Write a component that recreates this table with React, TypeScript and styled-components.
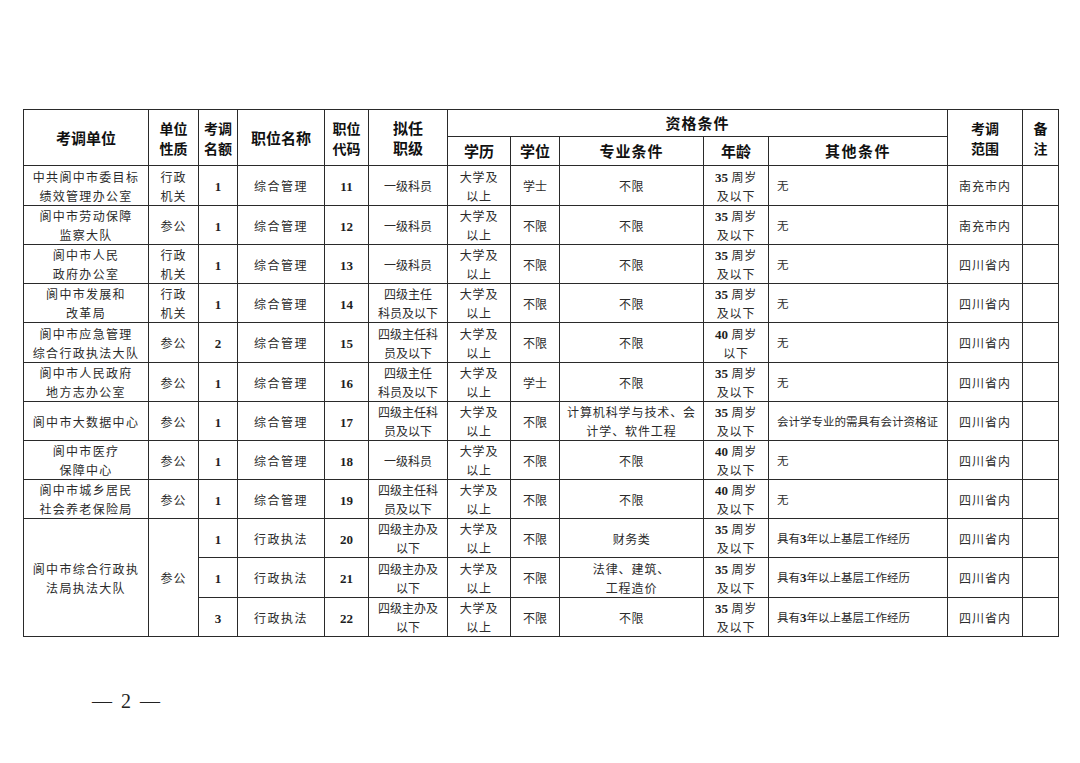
import React from 'react';
import styled, { createGlobalStyle } from 'styled-components';

const GlobalStyle = createGlobalStyle`
  html, body { margin: 0; padding: 0; background: #ffffff; }
  body { font-family: "Noto Sans CJK SC", "Noto Sans", sans-serif; }
`;

const Page = styled.div`
  width: 1080px;
  height: 763px;
  box-sizing: border-box;
  padding: 109px 0 0 23px;
  background: #ffffff;
  overflow: hidden;
`;

const Table = styled.table`
  border-collapse: collapse;
  table-layout: fixed;
  width: 1036px;
  border: 1px solid #1a1a1a;
`;

const Th = styled.th<{ $ls?: number; $size?: number }>`
  border: 1px solid #2a2a2a;
  padding: 0;
  font-family: "Noto Sans CJK SC", sans-serif;
  font-weight: 700;
  font-size: ${(p) => p.$size ?? 15}px;
  line-height: 20px;
  letter-spacing: ${(p) => p.$ls ?? 0}px;
  color: #111111;
  text-align: center;
  vertical-align: middle;
  white-space: pre-line;
`;

const Td = styled.td<{ $ls?: number; $size?: number; $left?: boolean }>`
  border: 1px solid #2a2a2a;
  padding: ${(p) => (p.$left ? '0 0 0 8px' : '0')};
  font-family: "Noto Sans CJK SC", sans-serif;
  font-weight: 400;
  font-size: ${(p) => p.$size ?? 12}px;
  line-height: 19px;
  letter-spacing: ${(p) => p.$ls ?? 0}px;
  color: #2b2b2b;
  text-align: ${(p) => (p.$left ? 'left' : 'center')};
  vertical-align: middle;
  white-space: nowrap;
`;

const Line = styled.span`
  display: block;
  height: 19px;
  line-height: 19px;
`;

const HeadRow = styled.tr<{ $h: number }>`
  height: ${(p) => p.$h}px;
`;

const BodyRow = styled.tr<{ $h: number }>`
  height: ${(p) => p.$h}px;
`;

const Num = styled.span`
  font-family: "Liberation Serif", "DejaVu Serif", serif;
  font-weight: 700;
  font-size: 13px;
  line-height: 1;
  letter-spacing: 0;
  color: #1e1e1e;
`;

const Footer = styled.div`
  margin-top: 52px;
  padding-left: 69px;
  font-family: "Liberation Serif", "DejaVu Serif", serif;
  font-size: 20px;
  line-height: 24px;
  color: #222222;
  letter-spacing: 2px;
  white-space: pre;
`;

const richLine = (text: string) =>
  text.split(/(\d+)/).map((part, i) =>
    /^\d+$/.test(part) ? <Num key={i}>{part}</Num> : <React.Fragment key={i}>{part}</React.Fragment>
  );

const lines = (text: string) =>
  text.split('\n').map((l, i) => <Line key={i}>{richLine(l)}</Line>);

const colWidths = [125, 50, 39, 87, 44, 79, 63, 49, 144, 65, 179, 75, 36];

type Row = {
  h: number;
  unit?: string;
  unitSpan?: number;
  nature?: string;
  count: string;
  name: string;
  code: string;
  level: string;
  edu: string;
  degree: string;
  major: string;
  age: string;
  other: string;
  scope: string;
};

const EDU = '大学及\n以上';
const A35 = '35 周岁\n及以下';
const A40 = '40 周岁\n及以下';

const rows: Row[] = [
  { h: 40, unit: '中共阆中市委目标\n绩效管理办公室', nature: '行政\n机关', count: '1', name: '综合管理', code: '11', level: '一级科员', edu: EDU, degree: '学士', major: '不限', age: A35, other: '无', scope: '南充市内' },
  { h: 39, unit: '阆中市劳动保障\n监察大队', nature: '参公', count: '1', name: '综合管理', code: '12', level: '一级科员', edu: EDU, degree: '不限', major: '不限', age: A35, other: '无', scope: '南充市内' },
  { h: 39, unit: '阆中市人民\n政府办公室', nature: '行政\n机关', count: '1', name: '综合管理', code: '13', level: '一级科员', edu: EDU, degree: '不限', major: '不限', age: A35, other: '无', scope: '四川省内' },
  { h: 39, unit: '阆中市发展和\n改革局', nature: '行政\n机关', count: '1', name: '综合管理', code: '14', level: '四级主任\n科员及以下', edu: EDU, degree: '不限', major: '不限', age: A35, other: '无', scope: '四川省内' },
  { h: 40, unit: '阆中市应急管理\n综合行政执法大队', nature: '参公', count: '2', name: '综合管理', code: '15', level: '四级主任科\n员及以下', edu: EDU, degree: '不限', major: '不限', age: '40 周岁\n以下', other: '无', scope: '四川省内' },
  { h: 39, unit: '阆中市人民政府\n地方志办公室', nature: '参公', count: '1', name: '综合管理', code: '16', level: '四级主任\n科员及以下', edu: EDU, degree: '学士', major: '不限', age: A35, other: '无', scope: '四川省内' },
  { h: 39, unit: '阆中市大数据中心', nature: '参公', count: '1', name: '综合管理', code: '17', level: '四级主任科\n员及以下', edu: EDU, degree: '不限', major: '计算机科学与技术、会\n计学、软件工程', age: A35, other: '会计学专业的需具有会计资格证', scope: '四川省内' },
  { h: 39, unit: '阆中市医疗\n保障中心', nature: '参公', count: '1', name: '综合管理', code: '18', level: '一级科员', edu: EDU, degree: '不限', major: '不限', age: A40, other: '无', scope: '四川省内' },
  { h: 39, unit: '阆中市城乡居民\n社会养老保险局', nature: '参公', count: '1', name: '综合管理', code: '19', level: '四级主任科\n员及以下', edu: EDU, degree: '不限', major: '不限', age: A40, other: '无', scope: '四川省内' },
  { h: 39, unit: '阆中市综合行政执\n法局执法大队', unitSpan: 3, nature: '参公', count: '1', name: '行政执法', code: '20', level: '四级主办及\n以下', edu: EDU, degree: '不限', major: '财务类', age: A35, other: '具有3年以上基层工作经历', scope: '四川省内' },
  { h: 40, count: '1', name: '行政执法', code: '21', level: '四级主办及\n以下', edu: EDU, degree: '不限', major: '法律、建筑、\n工程造价', age: A35, other: '具有3年以上基层工作经历', scope: '四川省内' },
  { h: 39, count: '3', name: '行政执法', code: '22', level: '四级主办及\n以下', edu: EDU, degree: '不限', major: '不限', age: A35, other: '具有3年以上基层工作经历', scope: '四川省内' },
];

export default function App() {
  return (
    <>
      <GlobalStyle />
      <Page>
        <Table>
          <colgroup>
            {colWidths.map((w, i) => (
              <col key={i} style={{ width: w }} />
            ))}
          </colgroup>
          <thead>
            <HeadRow $h={27}>
              <Th rowSpan={2}>考调单位</Th>
              <Th rowSpan={2} $size={14}>{'单位\n性质'}</Th>
              <Th rowSpan={2} $size={14}>{'考调\n名额'}</Th>
              <Th rowSpan={2}>职位名称</Th>
              <Th rowSpan={2} $size={14}>{'职位\n代码'}</Th>
              <Th rowSpan={2}>{'拟任\n职级'}</Th>
              <Th colSpan={5} $ls={1}>资格条件</Th>
              <Th rowSpan={2} $size={14}>{'考调\n范围'}</Th>
              <Th rowSpan={2} $size={14}>{'备\n注'}</Th>
            </HeadRow>
            <HeadRow $h={29}>
              <Th>学历</Th>
              <Th>学位</Th>
              <Th $ls={1}>专业条件</Th>
              <Th>年龄</Th>
              <Th $ls={1.5}>其他条件</Th>
            </HeadRow>
          </thead>
          <tbody>
            {rows.map((r, i) => (
              <BodyRow key={i} $h={r.h}>
                {r.unit !== undefined && (
                  <Td rowSpan={r.unitSpan} $ls={1.3}>
                    {lines(r.unit)}
                  </Td>
                )}
                {r.nature !== undefined && (
                  <Td rowSpan={r.unitSpan} $ls={1}>
                    {lines(r.nature)}
                  </Td>
                )}
                <Td>{lines(r.count)}</Td>
                <Td $ls={1.5}>{lines(r.name)}</Td>
                <Td>{lines(r.code)}</Td>
                <Td>{lines(r.level)}</Td>
                <Td $ls={0.8}>{lines(r.edu)}</Td>
                <Td>{lines(r.degree)}</Td>
                <Td $ls={r.major.length > 8 ? 0.9 : 0.5}>{lines(r.major)}</Td>
                <Td $ls={0.8}>{lines(r.age)}</Td>
                <Td $left $size={11.5}>
                  {lines(r.other)}
                </Td>
                <Td $ls={1}>{lines(r.scope)}</Td>
                <Td></Td>
              </BodyRow>
            ))}
          </tbody>
        </Table>
        <Footer>{'— 2 —'}</Footer>
      </Page>
    </>
  );
}
